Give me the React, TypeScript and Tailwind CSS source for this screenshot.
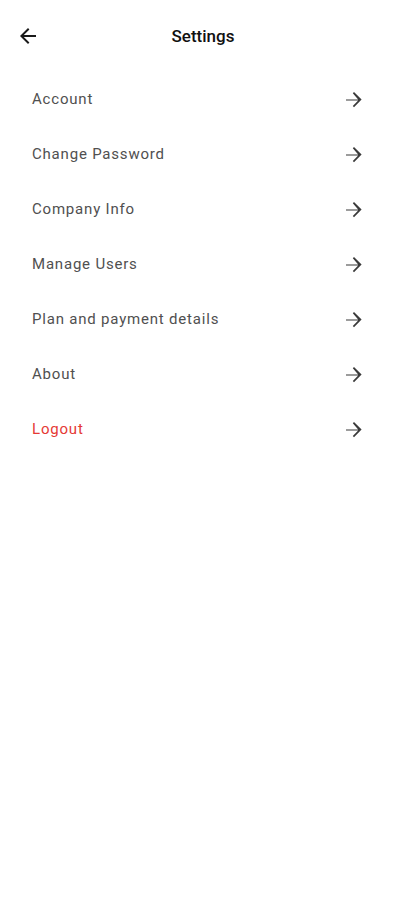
import React from 'react';

type Item = { label: string; danger?: boolean };

const items: Item[] = [
  { label: 'Account' },
  { label: 'Change Password' },
  { label: 'Company Info' },
  { label: 'Manage Users' },
  { label: 'Plan and payment details' },
  { label: 'About' },
  { label: 'Logout', danger: true },
];

function ArrowForward() {
  return (
    <svg width="24" height="24" viewBox="0 0 24 24" className="fill-[#3a3a3a]">
      <path d="M12 4l-1.2 1.2L16.17 11.4H4v1.2h12.17l-5.37 5.4L12 19.2l7.6-7.6z" />
    </svg>
  );
}

function ArrowBack() {
  return (
    <svg width="24" height="24" viewBox="0 0 24 24" className="fill-[#1a1a1a]">
      <path d="M20 11H7.83l5.59-5.59L12 4l-8 8 8 8 1.41-1.41L7.83 13H20v-2z" />
    </svg>
  );
}

export default function App() {
  return (
    <div className="min-h-[900px] w-[406px] bg-white pt-[1px] font-['Roboto','Liberation_Sans',sans-serif]">
      {/* Header */}
      <div className="relative flex h-[71px] items-center justify-center">
        <button className="absolute left-[16px] top-[23px]">
          <ArrowBack />
        </button>
        <h1 className="text-[17px] font-medium text-[#111]">Settings</h1>
      </div>

      {/* Settings list */}
      <div className="flex flex-col">
        {items.map((item) => (
          <div
            key={item.label}
            className="flex h-[55px] items-center justify-between pl-[32px] pr-[40px]"
          >
            <span
              className={
                'text-[15px] tracking-[0.8px] ' +
                (item.danger ? 'text-[#e53935]' : 'text-[#505050]')
              }
            >
              {item.label}
            </span>
            <ArrowForward />
          </div>
        ))}
      </div>
    </div>
  );
}
